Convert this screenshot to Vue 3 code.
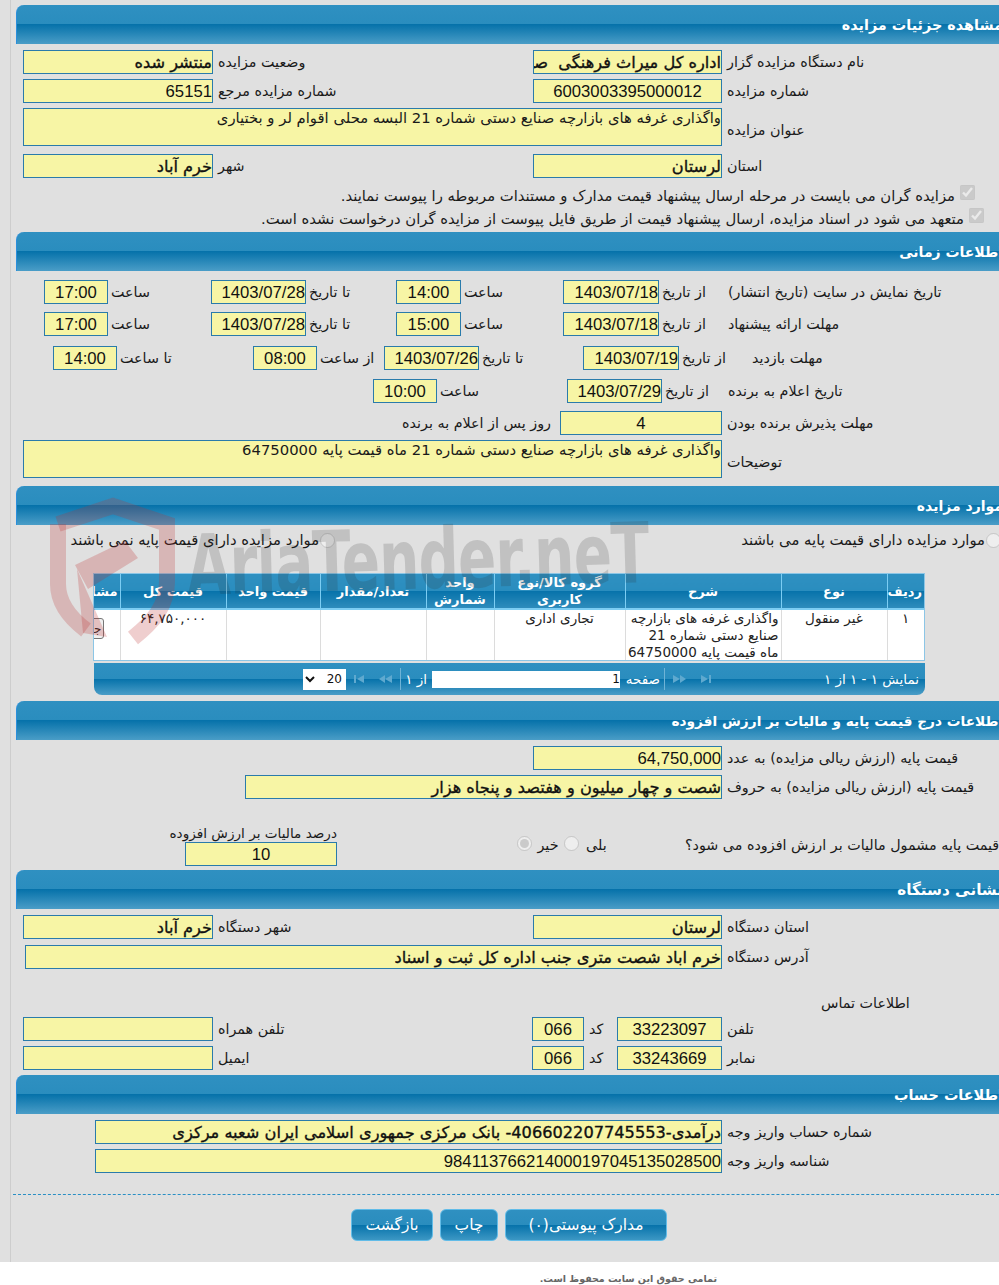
<script setup>
const heads = [
  { t: 'ردیف', w: 37 }, { t: 'نوع', w: 106 }, { t: 'شرح', w: 156 }, { t: 'گروه کالا/نوع کاربری', w: 131 },
  { t: 'واحد شمارش', w: 68 }, { t: 'تعداد/مقدار', w: 106 }, { t: 'قیمت واحد', w: 94 }, { t: 'قیمت کل', w: 106 }, { t: 'مشاهده', w: 50 }
]
</script>

<template>
  <div class="page">
    <div class="sheet">
      <div class="band wider m5">مشاهده جزئیات مزایده</div>
      <div class="row two m6">
        <div class="fld rt strong">منتشر شده</div><div class="lb">وضعیت مزایده</div>
        <div class="fld rt strong">اداره کل میراث فرهنگی &nbsp;صنایع دستی و گردشگری استان لرستان</div><div class="lb">نام دستگاه مزایده گزار</div>
      </div>
      <div class="row two m5">
        <div class="fld rt num">65151</div><div class="lb">شماره مزایده مرجع</div>
        <div class="fld ctr num">6003003395000012</div><div class="lb">شماره مزایده</div>
      </div>
      <div class="row wide m5">
        <div class="area">واگذاری غرفه های بازارچه صنایع دستی شماره 21 البسه محلی اقوام لر و بختیاری</div><div class="lb">عنوان مزایده</div>
      </div>
      <div class="row two m8">
        <div class="fld rt strong">خرم آباد</div><div class="lb">شهر</div>
        <div class="fld rt strong">لرستان</div><div class="lb">استان</div>
      </div>
      <label class="chk chk1 m7"><input type="checkbox" checked disabled><span>مزایده گران می بایست در مرحله ارسال پیشنهاد قیمت مدارک و مستندات مربوطه را پیوست نمایند.</span></label>
      <label class="chk chk2 m3"><input type="checkbox" checked disabled><span>متعهد می شود در اسناد مزایده، ارسال پیشنهاد قیمت از طریق فایل پیوست از مزایده گران درخواست نشده است.</span></label>

      <div class="band m4">اطلاعات زمانی</div>
      <div class="row tA m9">
        <div class="fld ctr num">17:00</div><div class="lb">ساعت</div>
        <div class="fld rt num">1403/07/28</div><div class="lb">تا تاریخ</div>
        <div class="fld ctr num">14:00</div><div class="lb">ساعت</div>
        <div class="fld rt num">1403/07/18</div><div class="lb">از تاریخ</div>
        <div class="lb">تاریخ نمایش در سایت (تاریخ انتشار)</div>
      </div>
      <div class="row tA m8">
        <div class="fld ctr num">17:00</div><div class="lb">ساعت</div>
        <div class="fld rt num">1403/07/28</div><div class="lb">تا تاریخ</div>
        <div class="fld ctr num">15:00</div><div class="lb">ساعت</div>
        <div class="fld rt num">1403/07/18</div><div class="lb">از تاریخ</div>
        <div class="lb">مهلت ارائه پیشنهاد</div>
      </div>
      <div class="row tC m10">
        <div class="fld ctr num">14:00</div><div class="lb">تا ساعت</div>
        <div class="fld ctr num">08:00</div><div class="lb">از ساعت</div>
        <div class="fld rt num">1403/07/26</div><div class="lb">تا تاریخ</div>
        <div class="fld rt num">1403/07/19</div><div class="lb">از تاریخ</div>
        <div class="lb">مهلت بازدید</div>
      </div>
      <div class="row tD m9">
        <div class="fld ctr num">10:00</div><div class="lb">ساعت</div>
        <div class="fld rt num">1403/07/29</div><div class="lb">از تاریخ</div>
        <div class="lb">تاریخ اعلام به برنده</div>
      </div>
      <div class="row tE m8">
        <div class="lb after">روز پس از اعلام به برنده</div>
        <div class="fld ctr num">4</div>
        <div class="lb">مهلت پذیرش برنده بودن</div>
      </div>
      <div class="row wide m5">
        <div class="area">واگذاری غرفه های بازارچه صنایع دستی شماره 21 ماه قیمت پایه 64750000</div><div class="lb">توضیحات</div>
      </div>

      <div class="band m8">موارد مزایده</div>
      <div class="radios m5">
        <label class="opt"><span>موارد مزایده دارای قیمت پایه نمی باشند</span><input type="radio" disabled></label>
        <label class="opt"><span>موارد مزایده دارای قیمت پایه می باشند</span><input type="radio" disabled></label>
      </div>
      <div class="gridwrap m23">
        <table class="grid">
          <colgroup><col v-for="h in heads" :key="h.t" :style="{ width: h.w + 'px' }"></colgroup>
          <thead><tr><th v-for="h in heads" :key="h.t">{{ h.t }}</th></tr></thead>
          <tbody>
            <tr>
              <td>۱</td><td>غیر منقول</td>
              <td class="desc">واگذاری غرفه های بازارچه صنایع دستی شماره 21 ماه قیمت پایه 64750000</td>
              <td>تجاری اداری</td><td></td><td></td><td></td><td>۶۴,۷۵۰,۰۰۰</td>
              <td class="act"><button class="mini" type="button">جزئیات</button></td>
            </tr>
          </tbody>
        </table>
      </div>
      <div class="pager m2">
        <select class="size"><option>20</option></select>
        <svg class="nav" width="38" height="10" viewBox="0 0 38 10"><path d="M0 1h2v8H0zM3 5l7-4v8zM25 5l6-4v8zM31 5l7-4v8z" /></svg>
        <i class="sep"></i>
        <span class="pg1">از ۱</span>
        <div class="pageno">1</div>
        <span class="pg2">صفحه</span>
        <i class="sep sep2"></i>
        <svg class="nav" width="38" height="10" viewBox="0 0 38 10"><path d="M0 1l7 4-7 4zM7 1l6 4-6 4zM28 1l7 4-7 4zM36 1h2v8h-2z" /></svg>
        <span class="count">نمایش ۱ - ۱ از ۱</span>
      </div>

      <div class="band narrower m6">اطلاعات درج قیمت پایه و مالیات بر ارزش افزوده</div>
      <div class="row two m6">
        <div></div><div></div>
        <div class="fld rt num">64,750,000</div><div class="lb">قیمت پایه (ارزش ریالی مزایده) به عدد</div>
      </div>
      <div class="row hw m5">
        <div class="fld rt strong">شصت و چهار میلیون و هفتصد و پنجاه هزار</div><div class="lb">قیمت پایه (ارزش ریالی مزایده) به حروف</div>
      </div>
      <div class="row vat m25">
        <div class="vatbox">
          <div class="cap">درصد مالیات بر ارزش افزوده</div>
          <div class="fld ctr num">10</div>
        </div>
        <div class="yn">
          <input type="radio" name="vat" checked disabled><span class="no">خیر</span>
          <input type="radio" name="vat" disabled><span class="yes">بلی</span>
        </div>
        <div class="lb q">قیمت پایه مشمول مالیات بر ارزش افزوده می شود؟</div>
      </div>

      <div class="band widest m4">نشانی دستگاه</div>
      <div class="row two m6">
        <div class="fld rt strong">خرم آباد</div><div class="lb">شهر دستگاه</div>
        <div class="fld rt strong">لرستان</div><div class="lb">استان دستگاه</div>
      </div>
      <div class="row addr m6">
        <div class="fld rt strong">خرم اباد شصت متری جنب اداره کل ثبت و اسناد</div><div class="lb">آدرس دستگاه</div>
      </div>
      <div class="contact m24">اطلاعات تماس</div>
      <div class="row tel m4">
        <div class="fld"></div><div class="lb">تلفن همراه</div>
        <div class="fld ctr num">066</div><div class="lb code">کد</div>
        <div class="fld ctr num">33223097</div><div class="lb">تلفن</div>
      </div>
      <div class="row tel m5">
        <div class="fld"></div><div class="lb">ایمیل</div>
        <div class="fld ctr num">066</div><div class="lb code">کد</div>
        <div class="fld ctr num">33243669</div><div class="lb">نمابر</div>
      </div>

      <div class="band wider m5">اطلاعات حساب</div>
      <div class="row acc m6">
        <div class="fld rt strong">درآمدی-406602207745553- بانک مرکزی جمهوری اسلامی ایران شعبه مرکزی</div><div class="lb">شماره حساب واریز وجه</div>
      </div>
      <div class="row acc m5">
        <div class="fld rt num">984113766214000197045135028500</div><div class="lb">شناسه واریز وجه</div>
      </div>
      <div class="dash"></div>
      <div class="actions">
        <button class="btn b1" type="button">بازگشت</button>
        <button class="btn b2" type="button">چاپ</button>
        <button class="btn b3" type="button">مدارک پیوستی(۰)</button>
      </div>
    </div>
    <div class="foot">تمامی حقوق این سایت محفوظ است.</div>

    <div class="mark" aria-hidden="true">
      <svg class="shield" width="140" height="165" viewBox="0 0 140 165">
        <path class="sh" d="M13 27 68 9l54 18v58c0 24-14 40-34 56" />
        <path class="sh" d="M13 27v60c0 18 12 34 28 46" />
        <path class="fist" d="M30 68 80 44l13 17-50 31zM32 72l30 68-24-4z" />
      </svg>
      <div class="wm">AriaTender.neT</div>
    </div>
  </div>
</template>

<style>
html, body { margin: 0; background: #fff; }
</style>

<style scoped>
.page { position: relative; width: 999px; height: 1285px; overflow: hidden; background: #fff; font-family: "DejaVu Sans", Tahoma, sans-serif; font-size: 14.3px; color: #1a1a1a; }
.sheet { box-sizing: border-box; height: 1262px; padding-left: 16px; padding-bottom: 21px; background: linear-gradient(90deg, #e0e0e0 10px, #cdcdcd 10px, #cdcdcd 11px, #e0e0e0 11px); overflow: hidden; }
.sheet > * { width: 1000px; box-sizing: border-box; }
.m2 { margin-top: 2px; } .m3 { margin-top: 3px; } .m4 { margin-top: 4px; } .m5 { margin-top: 5px; } .m6 { margin-top: 6px; }
.m7 { margin-top: 7px; } .m8 { margin-top: 8px; } .m9 { margin-top: 9px; } .m10 { margin-top: 10px; } .m23 { margin-top: 23px; }
.m24 { margin-top: 24px; } .m25 { margin-top: 25px; }

.band { height: 39px; padding-right: 13px; line-height: 40px; direction: rtl; color: #fff; font-weight: 700; font-size: 14px; white-space: nowrap; border-left: 1px solid #2a8fdc; border-top-left-radius: 8px; background: linear-gradient(180deg, #2f90c1 0%, #2a8dbe 49%, #0672aa 50%, #4a9dc7 100%); }
.band.wider { font-size: 14.4px; }
.band.widest { font-size: 15.2px; }
.band.narrower { font-size: 13.7px; }

.row { display: grid; align-items: center; height: 24px; }
.two { padding-left: 7px; grid-template-columns: 190px 320px 189px 1fr; }
.wide { padding-left: 7px; grid-template-columns: 699px 1fr; height: 38px; }
.wide .lb { padding-top: 6px; }
.hw { padding-left: 229px; grid-template-columns: 477px 1fr; }
.addr { padding-left: 9px; grid-template-columns: 697px 1fr; }
.acc { padding-left: 79px; grid-template-columns: 627px 1fr; }
.tA { padding-left: 28px; grid-template-columns: 64px 103px 95px 90px 65px 102px 96px 66px 1fr; }
.tC { padding-left: 37px; grid-template-columns: 64px 136px 64px 67px 95px 104px 96px 70px 1fr; }
.tD { padding-left: 357px; grid-template-columns: 64px 130px 95px 66px 1fr; }
.tE { padding-left: 7px; grid-template-columns: 537px 162px 1fr; }
.tel { padding-left: 7px; grid-template-columns: 190px 319px 52px 33px 105px 1fr; }
.tA .lb, .tC .lb { padding-left: 3px; }
.tD .lb { padding-left: 3px; }
.tD .lb:last-child { margin-left: -3px; }

.fld { box-sizing: border-box; height: 100%; border: 1px solid #2a7bab; background: #f7f5a5; direction: rtl; overflow: hidden; white-space: pre; line-height: 23px; color: #111; }
.area { box-sizing: border-box; height: 100%; border: 1px solid #2a7bab; background: #f7f5a5; direction: rtl; overflow: hidden; white-space: nowrap; line-height: 18px; font-size: 14.8px; }
.rt { text-align: right; }
.ctr { text-align: center; }
.num { font-family: "Liberation Sans", Arial, sans-serif; font-size: 16.7px; direction: ltr; }
.rt.num { text-align: right; }
.strong { font-size: 16.2px; font-weight: 400; -webkit-text-stroke: .35px #111; }
.lb { direction: rtl; text-align: left; padding-left: 5px; white-space: nowrap; line-height: 23px; }
.lb.after { text-align: right; padding: 0 9px 0 0; }

.chk { display: flex; direction: rtl; align-items: flex-start; height: 20px; line-height: 21px; white-space: nowrap; font-size: 14.8px; }
.chk input { appearance: auto; width: 15px; height: 15px; margin: 0 0 0 5px; }
.chk1 { padding-right: 41px; }
.chk2 { padding-right: 32px; }

.radios { display: flex; direction: rtl; height: 20px; line-height: 20px; padding-right: 15px; font-size: 14.8px; }
.opt { display: flex; direction: ltr; align-items: center; gap: 1px; white-space: nowrap; }
.opt span { direction: rtl; }
.opt input { width: 15px; height: 15px; margin: 0; }
.radios .opt:first-child { order: 2; margin-right: 406px; }
.radios .opt:last-child { order: 1; }

.gridwrap { width: 832px !important; margin-left: 77px; height: 88px; border: 1px solid #8cc6e6; overflow: hidden; direction: rtl; background: #fff; }
.grid { border-collapse: collapse; table-layout: fixed; width: 854px; direction: rtl; }
.grid th { height: 34px; padding: 0 2px; color: #fff; font-size: 13px; font-weight: 700; line-height: 17px; border-left: 1px solid #7ccdf3; border-bottom: 2px solid #7ccdf3; background: linear-gradient(180deg, #2f90c1 0%, #2a8dbe 49%, #0672aa 50%, #2e8cbc 100%); }
.grid td { height: 52px; padding: 0 2px; vertical-align: top; text-align: center; font-size: 13.5px; line-height: 17px; border-left: 1px solid #dcdcdc; border-bottom: 2px solid #d5dde3; color: #222; }
.grid td.desc { text-align: right; }
.grid td.act { text-align: right; padding: 8px 16px 0 0; overflow: hidden; border-left: 0; }
.mini { box-sizing: border-box; width: 40px; height: 21px; padding: 0; background: #f0f0f0; border: 1px solid #777; border-radius: 3px; font: 12px "DejaVu Sans", sans-serif; direction: rtl; text-align: center; color: #222; }

.pager { display: flex; align-items: center; width: 831px !important; height: 32px; margin-left: 78px; padding: 0 6px 0 209px; border-radius: 0 0 8px 8px; color: #fff; font-size: 13.5px; background: linear-gradient(180deg, #2f90c1 0%, #2a8dbe 49%, #0672aa 50%, #4a9dc7 100%); }
.size { box-sizing: border-box; width: 43px; height: 21px; margin: 0; padding: 0; border: 0; background: #fff; direction: rtl; font: 12px "DejaVu Sans", sans-serif; color: #111; }
.nav { flex: none; margin-left: 8px; fill: #5fa9cf; }
.sep { flex: none; width: 1px; height: 22px; margin-left: 8px; background: #6fb3d6; }
.sep2 { margin-left: 4px; }
.pg1 { box-sizing: border-box; margin-left: 6px; width: 25px; padding-right: 5px; direction: rtl; white-space: nowrap; }
.pageno { flex: none; box-sizing: border-box; width: 188px; height: 17px; background: #fff; color: #111; text-align: right; line-height: 17px; font-size: 12px; }
.pg2 { width: 36px; margin-left: 4px; direction: rtl; white-space: nowrap; }
.count { margin-left: auto; direction: rtl; white-space: nowrap; }

.vat { height: 42px; padding-left: 169px; grid-template-columns: 152px 348px 1fr; align-items: end; }
.vatbox { display: flex; flex-direction: column; direction: rtl; }
.cap { height: 18px; line-height: 18px; white-space: nowrap; font-size: 13.6px; }
.vatbox .fld { height: 24px; flex: none; }
.yn { display: flex; align-items: center; align-self: stretch; padding-left: 180px; direction: ltr; }
.yn input { flex: none; width: 15px; height: 15px; margin: 0 0 4px; }
.no { width: 32px; text-align: center; }
.yes { margin-left: 7px; }
.q { align-self: center; justify-self: start; width: max-content; padding-left: 0; }

.contact { height: 20px; line-height: 20px; padding-left: 805px; direction: rtl; text-align: left; white-space: nowrap; }

.dash { width: 986px !important; margin: 21px 0 0 -3px; border-top: 1px dashed #2a8fc4; height: 0; }
.actions { display: flex; gap: 7px; margin-top: 14px; padding-left: 335px; }
.btn { box-sizing: border-box; height: 32px; padding: 0; border: 1px solid #62bce8; border-radius: 6px; color: #fff; font: 15.5px "DejaVu Sans", sans-serif; direction: rtl; background: linear-gradient(180deg, #2f90c1 0%, #2a8dbe 49%, #0672aa 50%, #3c97c4 100%); }
.b1 { width: 82px; } .b2 { width: 58px; } .b3 { width: 162px; }

.foot { width: 717px; direction: rtl; text-align: right; font-size: 9.5px; font-weight: 700; line-height: 14px; color: #666; margin-top: 10px; white-space: nowrap; }

.mark { position: absolute; left: 0; top: 0; width: 999px; height: 1285px; pointer-events: none; }
.shield { position: absolute; left: 45px; top: 497px; }
.sh { fill: none; stroke: rgba(190, 50, 50, .24); stroke-width: 16; }
.fist { fill: rgba(190, 40, 40, .24); }
.wm { position: absolute; left: 188px; top: 524px; font: 700 84px/1 "DejaVu Sans", sans-serif; font-stretch: condensed; color: rgba(40, 40, 40, .17); white-space: nowrap; transform: rotate(-1.6deg) scaleX(.745); transform-origin: 0 100%; letter-spacing: -1px; }
</style>
